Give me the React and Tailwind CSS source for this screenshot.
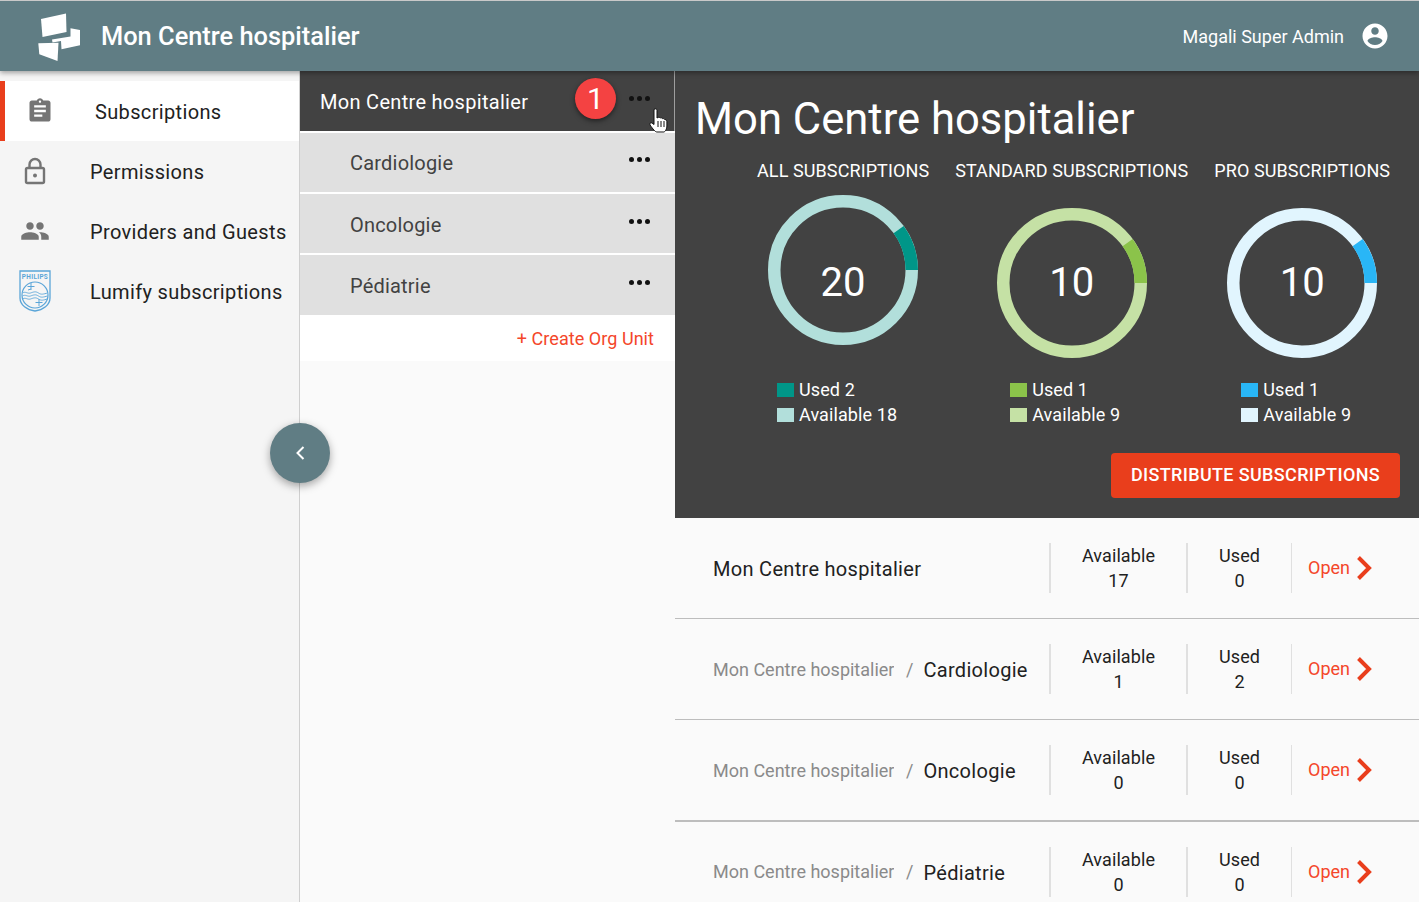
import React from "react";

const ICONS = {
  clipboard: "M19 3h-4.18C14.4 1.84 13.3 1 12 1c-1.3 0-2.4.84-2.82 2H5c-1.1 0-2 .9-2 2v14c0 1.1.9 2 2 2h14c1.1 0 2-.9 2-2V5c0-1.1-.9-2-2-2zm-7 0c.55 0 1 .45 1 1s-.45 1-1 1-1-.45-1-1 .45-1 1-1zm2 14H7v-2h7v2zm3-4H7v-2h10v2zm0-4H7V7h10v2z",
  people: "M16 11c1.66 0 2.99-1.34 2.99-3S17.66 5 16 5c-1.66 0-3 1.34-3 3s1.34 3 3 3zm-8 0c1.66 0 2.99-1.34 2.99-3S9.66 5 8 5C6.34 5 5 6.34 5 8s1.34 3 3 3zm0 2c-2.33 0-7 1.17-7 3.5V19h14v-2.5c0-2.33-4.67-3.5-7-3.5zm8 0c-.29 0-.62.02-.97.05 1.16.84 1.97 1.97 1.97 3.45V19h6v-2.5c0-2.33-4.67-3.5-7-3.5z",
  account: "M12 2C6.48 2 2 6.48 2 12s4.48 10 10 10 10-4.48 10-10S17.52 2 12 2zm0 3c1.66 0 3 1.34 3 3s-1.34 3-3 3-3-1.34-3-3 1.34-3 3-3zm0 14.2c-2.5 0-4.71-1.28-6-3.22.03-1.99 4-3.08 6-3.08 1.99 0 5.97 1.09 6 3.08-1.29 1.94-3.5 3.22-6 3.22z",
};

function Logo() {
  return (
    <svg viewBox="0 0 60 60" className="w-[60px] h-[60px] shrink-0" fill="#fff">
      <polygon points="11,13 36,7.5 36.5,26 12.5,31" />
      <polygon points="22,33.5 40.5,30.5 40.5,22.3 50,24 50,39.3 31.5,43.3 31,35 22.5,36.5" />
      <polygon points="8.3,37.3 28.5,36.7 27.500,55 9.3,48.3" />
    </svg>
  );
}

function LockIcon() {
  return (
    <svg viewBox="0 0 24 28" className="w-6 h-7" fill="none" stroke="#757575">
      <path d="M6.500 12V7.500a5.500 5.500 0 0 1 11 0V12" strokeWidth="2.4" />
      <rect x="3" y="11" width="18" height="15" rx="1.5" strokeWidth="2.4" />
      <circle cx="12" cy="18.500" r="2" fill="#757575" stroke="none" />
    </svg>
  );
}

function PhilipsIcon() {
  return (
    <svg viewBox="0 0 32 42" className="w-8 h-[42px]" fill="none" stroke="#5aa5d8">
      <path d="M1 1h30v27c0 7-7 12-15 13C8 40 1 35 1 28z" strokeWidth="1.3" />
      <text x="16" y="8.500" textAnchor="middle" fontSize="6.400" fontWeight="700" fill="#5aa5d8" stroke="none" fontFamily="Roboto, sans-serif">PHILIPS</text>
      <circle cx="16" cy="25" r="13" strokeWidth="1.2" />
      <path d="M3.500 23c3-2 5 1 8 0s5-2 8 0 5 1 9 0M3.500 26c3-2 5 1 8 0s5-2 8 0 5 1 9 0M3.500 29c3-2 5 1 8 0s5-2 8 0 5 1 9 0" strokeWidth="0.9" />
      <path d="M12 13v7M8.500 16.500h7M9 20l3-1M20 29v7M16.500 32.500h7" strokeWidth="1" />
    </svg>
  );
}

function Dots() {
  return (
    <div className="flex gap-[3px]">
      {[0, 1, 2].map((i) => (
        <span key={i} className="w-[5px] h-[5px] rounded-full bg-[#111]" />
      ))}
    </div>
  );
}

function Chevron() {
  return (
    <svg viewBox="0 0 16 24" className="w-4 h-6" fill="none" stroke="#e93e1c" strokeWidth="4">
      <path d="M2.500 1.500 13 12 2.500 22.500" />
    </svg>
  );
}

function Donut({ used, rest }) {
  return (
    <svg viewBox="0 0 150 150" className="w-[150px] h-[150px]" fill="none" strokeWidth="12.5">
      <circle cx="75" cy="75" r="68.750" stroke={rest} />
      <circle cx="75" cy="75" r="68.750" stroke={used} pathLength="100" strokeDasharray="10 90" strokeDashoffset="10" />
    </svg>
  );
}

const sideItems = [
  { label: "Subscriptions", icon: <svg viewBox="0 0 24 24" className="w-7 h-7" fill="#757575"><path d={ICONS.clipboard} /></svg>, active: true },
  { label: "Permissions", icon: <LockIcon /> },
  { label: "Providers and Guests", icon: <svg viewBox="0 0 24 24" className="w-[30px] h-[30px]" fill="#757575"><path d={ICONS.people} /></svg> },
  { label: "Lumify subscriptions", icon: <PhilipsIcon /> },
];

const units = [
  { name: "Cardiologie", cls: "h-[59px]" },
  { name: "Oncologie", cls: "h-[61px] border-t-2 border-white pt-[2px]" },
  { name: "Pédiatrie", cls: "h-[62px] border-t-2 border-white pt-px" },
];

const charts = [
  { title: "ALL SUBSCRIPTIONS", total: 20, used: 2, avail: 18, usedCol: "#009688", restCol: "#b2dfdb", top: "mt-[11px]", numTop: "top-[68px]", usedBg: "bg-[#009688]", restBg: "bg-[#b2dfdb]", legend: "ml-[20px]" },
  { title: "STANDARD SUBSCRIPTIONS", total: 10, used: 1, avail: 9, usedCol: "#8bc34a", restCol: "#c5e1a5", top: "mt-[24px]", numTop: "top-[55px]", usedBg: "bg-[#8bc34a]", restBg: "bg-[#c5e1a5]", legend: "ml-[55px]" },
  { title: "PRO SUBSCRIPTIONS", total: 10, used: 1, avail: 9, usedCol: "#29b6f6", restCol: "#e1f5fe", top: "mt-[24px]", numTop: "top-[55px]", usedBg: "bg-[#29b6f6]", restBg: "bg-[#e1f5fe]", legend: "ml-[27px]" },
];

const rows = [
  { name: "Mon Centre hospitalier", avail: 17, used: 0, cls: "h-[101px] border-b" },
  { parent: true, name: "Cardiologie", avail: 1, used: 2, cls: "h-[101px] border-b" },
  { parent: true, name: "Oncologie", avail: 0, used: 0, cls: "h-[102px] border-b-2" },
  { parent: true, name: "Pédiatrie", avail: 0, used: 0, cls: "h-[99px]" },
];

export default function App() {
  return (
    <div className="relative w-[1419px] h-[902px] overflow-hidden flex flex-col bg-[#fafafa] font-['Roboto',sans-serif] text-[#212121]">
      <header className="relative z-20 h-[71px] shrink-0 flex items-center justify-between bg-[#607d84] border-t border-[#c9c9c9] shadow-[0_2px_5px_rgba(0,0,0,0.35)] text-white">
        <div className="flex items-center pl-[30px]">
          <Logo />
          <span className="ml-[11px] pt-[1px] text-[25.400px] font-medium">Mon Centre hospitalier</span>
        </div>
        <div className="flex items-center pr-[29px] gap-[16px]">
          <span className="text-[18px]">Magali Super Admin</span>
          <svg viewBox="0 0 24 24" className="w-[30px] h-[30px]" fill="#fff"><path d={ICONS.account} /></svg>
        </div>
      </header>

      <div className="flex flex-1 min-h-0">
        <aside className="w-[300px] shrink-0 pt-[10px] bg-[#f5f5f5] border-r border-[#cfcfcf]">
          {sideItems.map((item) => (
            <div key={item.label} className={`h-[60px] flex items-center text-[20px] tracking-[0.35px] ${item.active ? "bg-white border-l-[5px] border-[#e93e1c]" : ""}`}>
              <div className="w-[70px] flex justify-center">{item.icon}</div>
              <span className="ml-[20px] pt-[2px]">{item.label}</span>
            </div>
          ))}
        </aside>

        <section className="w-[375px] shrink-0 flex flex-col">
          <div className="relative h-[60px] flex items-center justify-between pl-[20px] pr-[24px] bg-[#424242] text-white border-r border-[#9e9e9e]">
            <span className="text-[20px] tracking-[0.3px] pt-[2px]">Mon Centre hospitalier</span>
            <div className="-mt-[6px]"><Dots /></div>
            <span className="absolute left-[275px] top-[7px] w-[41px] h-[41px] rounded-full bg-[#f44242] shadow-[0_2px_5px_rgba(0,0,0,0.5)] flex items-center justify-center text-[30px]">1</span>
            <svg viewBox="0 0 20 26" className="absolute left-[349px] top-[36px] w-[20px] h-[26px]">
              <path d="M5 2.500c1.500-1.500 3-.5 3 1V11l1-.5c1-.5 2 0 2.300.5 1-.5 2 0 2.300.7 1-.4 2 .2 2.300 1 1-.2 2 .6 2 2V19c0 3-2 6-3 6H8c-2 0-4-3-7-7-.8-1.500.7-3 2-2l2 1.500z" fill="#fff" stroke="#111" strokeWidth="1" />
              <path d="M9 14v6M12 14v6M15 14v6" stroke="#111" strokeWidth="1" />
            </svg>
          </div>
          <div className="h-[2px] bg-white" />
          {units.map((u) => (
            <div key={u.name} className={`${u.cls} shrink-0 flex items-center justify-between pl-[50px] pr-[25px] bg-[#e0e0e0] text-[#424242] text-[20px] tracking-[0.2px]`}>
              <span>{u.name}</span>
              <div className="-mt-[7px]"><Dots /></div>
            </div>
          ))}
          <div className="h-[46px] flex items-center justify-end pr-[21px] bg-white text-[#f4462a] text-[18px] tracking-[0.05px]">+ Create Org Unit</div>
        </section>

        <main className="flex-1 min-w-0 flex flex-col">
          <div className="h-[447px] shrink-0 bg-[#424242] text-white pl-[20px] pr-[19px] tracking-[0.1px]">
            <h1 className="text-[43.600px] leading-[52px] pt-[23px] tracking-normal">Mon Centre hospitalier</h1>
            <div className="flex gap-[26px] pl-[62px] mt-[14px]">
              {charts.map((c) => (
                <div key={c.title} className="flex flex-col">
                  <div className="text-[18px] leading-[22px] whitespace-nowrap text-center">{c.title}</div>
                  <div className="h-[167px] mt-[2px]">
                    <div className={`relative flex justify-center ${c.top}`}>
                      <Donut used={c.usedCol} rest={c.restCol} />
                      <span className={`absolute inset-x-0 text-center text-[40px] leading-[40px] ${c.numTop}`}>{c.total}</span>
                    </div>
                  </div>
                  <div className={`${c.legend} text-[18px] leading-[25px] mt-[26px]`}>
                    <div className="flex items-center gap-[5px]"><span className={`w-[17px] h-[14px] ${c.usedBg}`} />Used {c.used}</div>
                    <div className="flex items-center gap-[5px]"><span className={`w-[17px] h-[14px] ${c.restBg}`} />Available {c.avail}</div>
                  </div>
                </div>
              ))}
            </div>
            <div className="flex justify-end mt-[26px]">
              <button className="w-[289px] h-[45px] pb-[2px] rounded-[4px] bg-[#e93e1c] text-[18px] font-medium tracking-[0.35px]">DISTRIBUTE SUBSCRIPTIONS</button>
            </div>
          </div>

          {rows.map((r) => (
            <div key={r.name} className={`${r.cls} shrink-0 flex items-center border-[#bdbdbd]`}>
              <div className="w-[374px] pl-[38px] flex items-center text-[20px] tracking-[0.3px]">
                {r.parent && (
                  <span className="flex items-center text-[18px] text-[#8a8a8a] tracking-normal">
                    <span className="w-[181px] overflow-hidden whitespace-nowrap">Mon Centre hospitalier</span>
                    <span className="ml-[12px] mr-[10px]">/</span>
                  </span>
                )}
                <span className="pt-[2px]">{r.name}</span>
              </div>
              <div className="w-[137px] h-[50px] border-l-2 border-[#e0e0e0] flex flex-col items-center justify-center text-[18px] leading-[25px] tracking-[0.1px]">
                <span>Available</span>
                <span>{r.avail}</span>
              </div>
              <div className="w-[105px] h-[50px] border-l-2 border-[#e0e0e0] flex flex-col items-center justify-center text-[18px] leading-[25px] tracking-[0.1px]">
                <span>Used</span>
                <span>{r.used}</span>
              </div>
              <div className="h-[50px] border-l border-[#e0e0e0] pl-[16px] flex items-center gap-[6px] text-[18px] text-[#f4462a]">
                <span className="pb-px">Open</span>
                <Chevron />
              </div>
            </div>
          ))}
        </main>
      </div>

      <button className="absolute z-10 left-[270px] top-[423px] w-[60px] h-[60px] rounded-full bg-[#607d84] shadow-[0_3px_8px_rgba(0,0,0,0.35)] flex items-center justify-center">
        <svg viewBox="0 0 12 16" className="w-[12px] h-[16px]" fill="none" stroke="#fff" strokeWidth="2">
          <path d="M9.500 2 3.500 8l6 6" />
        </svg>
      </button>
    </div>
  );
}
